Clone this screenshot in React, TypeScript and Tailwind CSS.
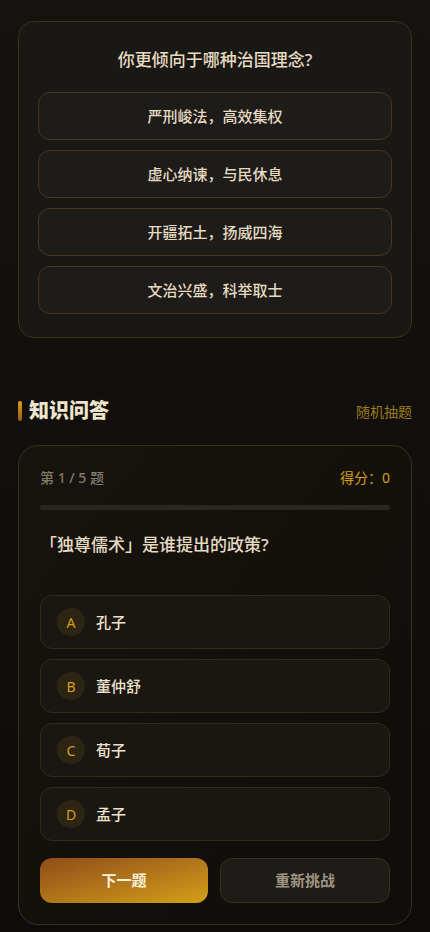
const policies = ["严刑峻法，高效集权", "虚心纳谏，与民休息", "开疆拓土，扬威四海", "文治兴盛，科举取士"];

const answers = [
  { key: "A", text: "孔子" },
  { key: "B", text: "董仲舒" },
  { key: "C", text: "荀子" },
  { key: "D", text: "孟子" },
];

export default function App() {
  return (
    <div
      className="min-h-[932px] w-[430px] bg-gradient-to-b from-[#15120f] to-[#0e0c0a] px-[18px] pt-[21px] pb-2"
      style={{ fontFamily: '"Noto Sans", "Noto Sans CJK SC", sans-serif' }}
    >
      {/* 治国理念 */}
      <div className="rounded-[16px] border border-[#3a301d] bg-[#1a1815] px-[19px] pt-[26px] pb-[23px]">
        <h2 className="text-center text-[17px] leading-[24px] font-medium text-[#e6dbc1]">
          你更倾向于哪种治国理念?
        </h2>
        <div className="mt-[20px] flex flex-col gap-[10px]">
          {policies.map((p) => (
            <button
              key={p}
              className="flex h-[48px] w-full items-center justify-center rounded-[12px] border border-[#45381d] bg-[#1e1c19] text-[15px] font-medium text-[#e6dbc1]"
            >
              {p}
            </button>
          ))}
        </div>
      </div>

      {/* 知识问答 */}
      <div className="mt-[59px] flex h-[28px] items-center justify-between">
        <div className="flex items-center gap-[7px]">
          <span className="h-[20px] w-[4px] rounded-full bg-gradient-to-b from-[#d4a017] to-[#9a5a17]" />
          <h3 className="text-[20px] leading-[28px] font-black text-[#efe4cc]">知识问答</h3>
        </div>
        <button className="text-[14px] text-[#9c7a1e]">随机抽题</button>
      </div>

      <div className="mt-[20px] rounded-[20px] border border-[#3a2f1b] bg-gradient-to-br from-[#17130e] to-[#100d0a] px-[21px] pt-[22px] pb-[21px]">
        <div className="flex items-center justify-between text-[14px] leading-[20px]">
          <span className="font-medium text-[#857a69]">第 1 / 5 题</span>
          <span className="text-[#d4a017]">得分：0</span>
        </div>
        <div className="mt-[17px] h-[5px] w-full rounded-full bg-[#2a2622]" />
        <p className="mt-[23px] text-[17px] leading-[24px] font-medium text-[#e6dbc1]">
          「独尊儒术」是谁提出的政策?
        </p>
        <div className="mt-[38px] flex flex-col gap-[10px]">
          {answers.map((a) => (
            <button
              key={a.key}
              className="flex h-[54px] w-full items-center gap-[11px] rounded-[12px] border border-[#33291a] bg-[#1a1713] px-[16px]"
            >
              <span className="flex h-[28px] w-[28px] items-center justify-center rounded-full bg-[#2d2414] text-[14px] text-[#d4a017]">
                {a.key}
              </span>
              <span className="text-[15px] font-medium text-[#ede3cb]">{a.text}</span>
            </button>
          ))}
        </div>
        <div className="mt-[17px] grid grid-cols-[168px_1fr] gap-[12px]">
          <button className="h-[45px] rounded-[12px] bg-gradient-to-br from-[#8e4d18] to-[#d4a017] text-[15px] font-bold text-[#fbf2de]">
            下一题
          </button>
          <button className="h-[45px] rounded-[12px] border border-[#3a301d] bg-[#1e1b18] text-[15px] font-semibold text-[#a09580]">
            重新挑战
          </button>
        </div>
      </div>
    </div>
  );
}
